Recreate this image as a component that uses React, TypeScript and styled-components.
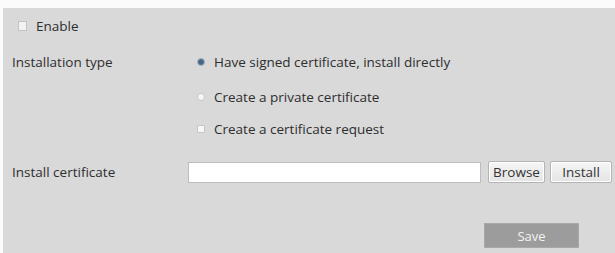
import React from "react";
import styled, { createGlobalStyle } from "styled-components";

const Global = createGlobalStyle`
  html, body { margin: 0; padding: 0; background: #ffffff; }
  body { font-family: "Open Sans", "Liberation Sans", sans-serif; }
`;

const Page = styled.div`
  width: 615px;
  height: 253px;
  padding: 8px 0 0 3px;
  box-sizing: border-box;
  background: #fbfbfb;
`;

const Panel = styled.div`
  height: 245px;
  background: #d9d9d9;
  box-sizing: border-box;
  padding: 10px 0 0 9px;
  display: flex;
  flex-direction: column;
  color: #2e2e2e;
  font-size: 13.5px;
`;

const EnableRow = styled.label`
  display: flex;
  align-items: center;
  height: 16px;
  padding-left: 6px;
  gap: 9px;
`;

const Box = styled.span`
  width: 7px;
  height: 8px;
  border: 1px solid #c4c4c4;
  background: #f2f2f2;
`;

const FormRow = styled.div<{ $top: number }>`
  display: grid;
  grid-template-columns: 176px 1fr;
  margin-top: ${(p) => p.$top}px;
`;

const Label = styled.div<{ $center?: boolean }>`
  line-height: 16px;
  align-self: ${(p) => (p.$center ? "center" : "start")};
`;

const Options = styled.div`
  display: flex;
  flex-direction: column;
`;

const Option = styled.label<{ $gap: number }>`
  display: flex;
  align-items: center;
  gap: 9px;
  line-height: 16px;
  padding-left: 9px;
  margin-top: ${(p) => p.$gap}px;
`;

const Radio = styled.span<{ $on?: boolean; $square?: boolean }>`
  width: 6px;
  height: 6px;
  border-radius: ${(p) => (p.$square ? "1px" : "50%")};
  border: 1px solid ${(p) => (p.$on ? "#a9b6c6" : "#c6c6c6")};
  background: ${(p) => (p.$on ? "#4a6586" : "#f7f7f7")};
`;

const FileRow = styled.div`
  display: flex;
  align-items: center;
  gap: 5px;
`;

const Input = styled.div`
  width: 293px;
  height: 21px;
  background: #ffffff;
  border: 1px solid #bdbdbd;
  box-sizing: border-box;
  margin-right: 2px;
`;

const Button = styled.button<{ $w: number }>`
  width: ${(p) => p.$w}px;
  height: 22px;
  padding: 0;
  font-family: inherit;
  font-size: 13.5px;
  color: #333;
  background: linear-gradient(#f6f6f6, #e4e4e4);
  border: 1px solid #b4b4b4;
  border-radius: 2px;
  box-shadow: inset 0 0 0 1px #ffffff;
`;

const Footer = styled.div`
  display: flex;
  margin-top: 40px;
  padding-left: 472px;
`;

const SaveButton = styled.button`
  width: 95px;
  height: 25px;
  background: #9c9c9c;
  border: 1px solid #a8a8a8;
  color: #f4f4f4;
  font-family: inherit;
  font-size: 13px;
`;

export default function App() {
  return (
    <>
      <Global />
      <Page>
        <Panel>
          <EnableRow>
            <Box />
            Enable
          </EnableRow>
          <FormRow $top={20}>
            <Label>Installation type</Label>
            <Options>
              <Option $gap={0}>
                <Radio $on />
                Have signed certificate, install directly
              </Option>
              <Option $gap={19}>
                <Radio />
                Create a private certificate
              </Option>
              <Option $gap={16}>
                <Radio $square />
                Create a certificate request
              </Option>
            </Options>
          </FormRow>
          <FormRow $top={24}>
            <Label $center>Install certificate</Label>
            <FileRow>
              <Input />
              <Button $w={57}>Browse</Button>
              <Button $w={62}>Install</Button>
            </FileRow>
          </FormRow>
          <Footer>
            <SaveButton>Save</SaveButton>
          </Footer>
        </Panel>
      </Page>
    </>
  );
}
